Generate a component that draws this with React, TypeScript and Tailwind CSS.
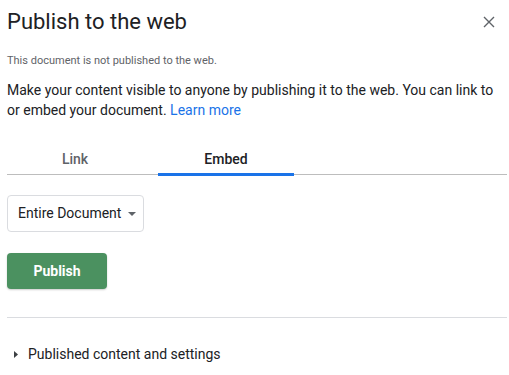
import React from "react";

export default function App() {
  return (
    <div
      className="w-[509px] h-[375px] bg-white overflow-hidden relative"
      style={{ fontFamily: "Roboto, 'Liberation Sans', sans-serif" }}
    >
      <div className="pl-[7px] pr-[2px]">
        <div className="flex items-start justify-between h-[40px] pt-[7px]">
          <h1 className="text-[22px] leading-[30px] text-[#202124] font-normal">
            Publish to the web
          </h1>
          <button className="mr-[11px] mt-[8px] w-[14px] h-[14px] flex items-center justify-center">
            <svg width="12" height="12" viewBox="0 0 12 12">
              <path d="M1 1 L11 11 M11 1 L1 11" stroke="#5f6368" strokeWidth="1.4" />
            </svg>
          </button>
        </div>
        <p className="mt-[14px] text-[11px] leading-[14px] text-[#5f6368]">
          This document is not published to the web.
        </p>
        <p className="mt-[12px] text-[14px] leading-[20px] text-[#202124]">
          Make your content visible to anyone by publishing it to the web. You can link to or embed your
          document. <span className="text-[#1a73e8]">Learn more</span>
        </p>
        <div className="mt-[25px] flex border-b border-[#bdbdbd] h-[30px]">
          <div className="w-[136px] text-center text-[14px] font-medium text-[#5f6368] leading-[20px] pt-[4px]">
            Link
          </div>
          <div className="ml-[15px] w-[136px] text-center text-[14px] font-medium text-[#202124] leading-[20px] pt-[4px] border-b-[3px] border-[#1a73e8] -mb-[2px]">
            Embed
          </div>
        </div>
        <div className="mt-[20px] w-[137px] h-[37px] border border-[#dadce0] rounded-[4px] flex items-center pl-[10px] text-[14px] text-[#202124]">
          <span>Entire Document</span>
          <svg className="ml-[7px]" width="8" height="4" viewBox="0 0 8 4">
            <path d="M0 0 L8 0 L4 4 Z" fill="#5f6368" />
          </svg>
        </div>
        <button className="mt-[21px] w-[100px] h-[36px] rounded-[4px] bg-[#4b9160] text-white text-[14px] font-bold shadow-[0_1px_2px_rgba(0,0,0,0.2)]">
          Publish
        </button>
        <div className="mt-[28px] border-t border-[#dadce0]" />
        <div className="mt-[28px] flex items-center text-[14px] text-[#202124] leading-[16px]">
          <svg className="ml-[7px] mr-[10px]" width="4" height="7" viewBox="0 0 4 7">
            <path d="M0 0 L4 3.5 L0 7 Z" fill="#3c4043" />
          </svg>
          <span>Published content and settings</span>
        </div>
      </div>
    </div>
  );
}
